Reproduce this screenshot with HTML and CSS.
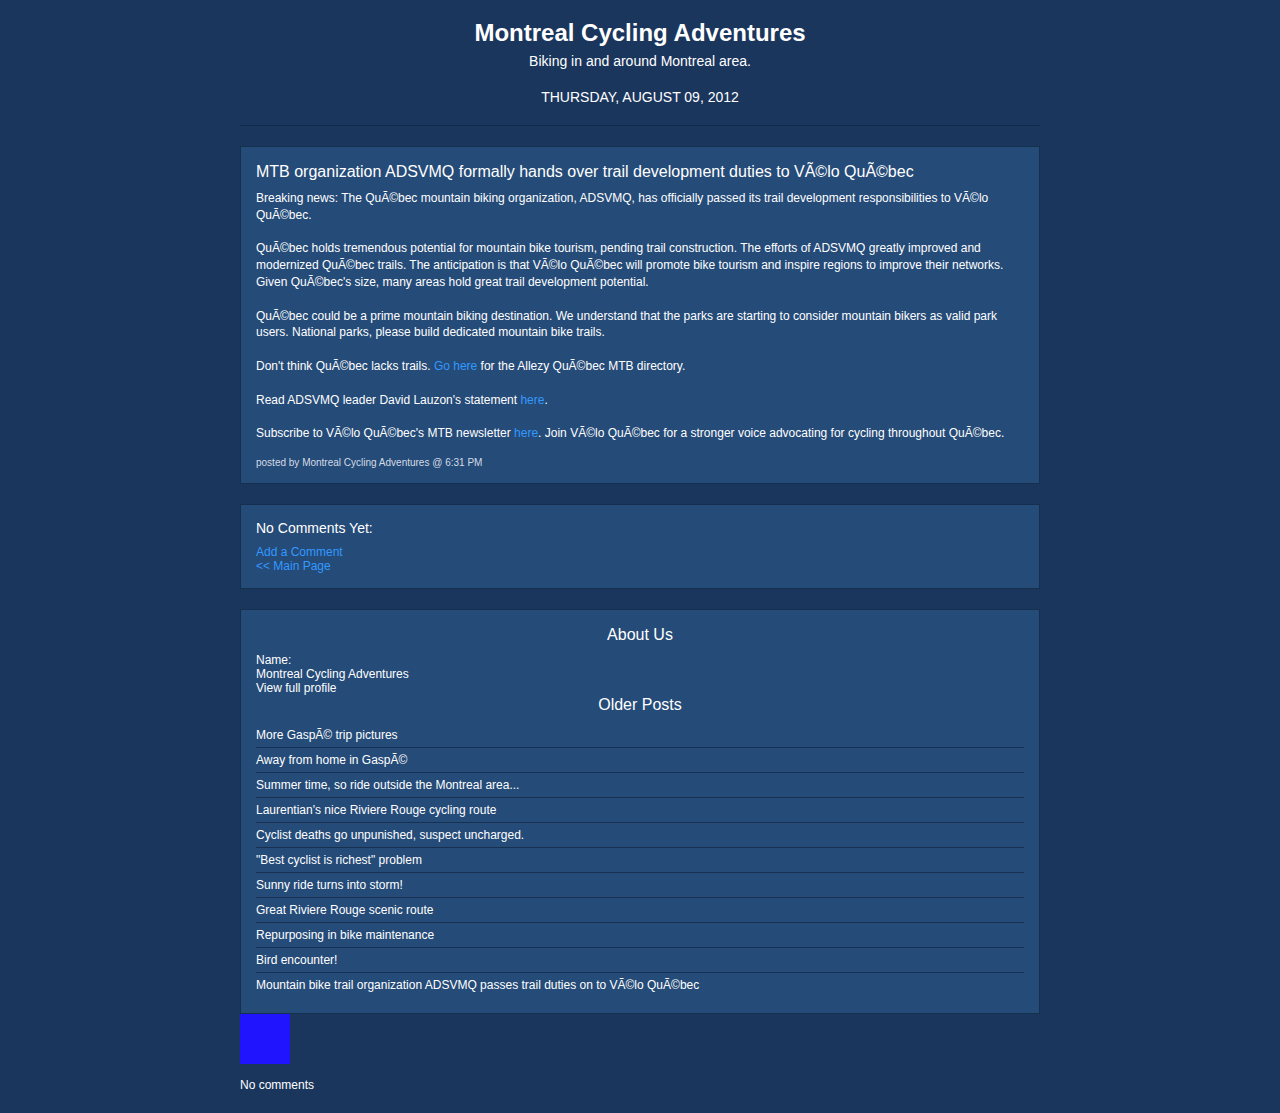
FILE: index.html
```html
<!DOCTYPE html>
<html>
<head>
<meta charset="utf-8">
<title>Montreal Cycling Adventures</title>
<link rel="stylesheet" href="styles.css">
</head>
<body>
<div class="page">
  <header class="site-header">
    <h1 class="site-title">Montreal Cycling Adventures</h1>
    <p class="site-desc">Biking in and around Montreal area.</p>
    <h2 class="date-header">THURSDAY, AUGUST 09, 2012</h2>
  </header>

  <section class="box post">
    <h3 class="post-title">MTB organization ADSVMQ formally hands over trail development duties to VÃ©lo QuÃ©bec</h3>
    <div class="post-body">
      <p>Breaking news: The QuÃ©bec mountain biking organization, ADSVMQ, has officially passed its trail development responsibilities to VÃ©lo QuÃ©bec.</p>
      <p>QuÃ©bec holds tremendous potential for mountain bike tourism, pending trail construction. The efforts of ADSVMQ greatly improved and modernized QuÃ©bec trails. The anticipation is that VÃ©lo QuÃ©bec will promote bike tourism and inspire regions to improve their networks. Given QuÃ©bec's size, many areas hold great trail development potential.</p>
      <p>QuÃ©bec could be a prime mountain biking destination. We understand that the parks are starting to consider mountain bikers as valid park users. National parks, please build dedicated mountain bike trails.</p>
      <p>Don't think QuÃ©bec lacks trails. <a href="#">Go here</a> for the Allezy QuÃ©bec MTB directory.</p>
      <p>Read ADSVMQ leader David Lauzon's statement <a href="#">here</a>.</p>
      <p>Subscribe to VÃ©lo QuÃ©bec's MTB newsletter <a href="#">here</a>. Join VÃ©lo QuÃ©bec for a stronger voice advocating for cycling throughout QuÃ©bec.</p>
    </div>
    <p class="post-footer">posted by Montreal Cycling Adventures @ 6:31 PM</p>
  </section>

  <section class="box comments">
    <h4 class="comments-title">No Comments Yet:</h4>
    <div class="comment-links">
      <a href="#">Add a Comment</a>
      <a href="#">&lt;&lt; Main Page</a>
    </div>
  </section>

  <section class="box sidebar">
    <h2 class="side-title">About Us</h2>
    <div class="profile">
      <span>Name:</span>
      <span>Montreal Cycling Adventures</span>
      <span>View full profile</span>
    </div>
    <h2 class="side-title older">Older Posts</h2>
    <ul class="recent">
      <li>More GaspÃ© trip pictures</li>
      <li>Away from home in GaspÃ©</li>
      <li>Summer time, so ride outside the Montreal area...</li>
      <li>Laurentian's nice Riviere Rouge cycling route</li>
      <li>Cyclist deaths go unpunished, suspect uncharged.</li>
      <li>"Best cyclist is richest" problem</li>
      <li>Sunny ride turns into storm!</li>
      <li>Great Riviere Rouge scenic route</li>
      <li>Repurposing in bike maintenance</li>
      <li>Bird encounter!</li>
      <li>Mountain bike trail organization ADSVMQ passes trail duties on to VÃ©lo QuÃ©bec</li>
    </ul>
  </section>

  <div class="badge"></div>
  <p class="no-comments">No comments</p>
</div>
</body>
</html>
```

FILE: styles.css
```css
html, body {
  margin: 0;
  padding: 0;
  background: #1b365d;
  color: #ffffff;
  font-family: "Liberation Sans", Arial, sans-serif;
  font-size: 12px;
}

.page {
  width: 800px;
  margin: 0 auto;
  padding-top: 19px;
  padding-bottom: 20px;
}

.site-header {
  text-align: center;
  border-bottom: 1px solid #142a4a;
  padding-bottom: 20px;
  margin-bottom: 20px;
}

.site-title {
  margin: 0;
  font-size: 24px;
  line-height: 28px;
  font-weight: bold;
}

.site-desc {
  margin: 6px 0 0;
  font-size: 14px;
  line-height: 16px;
}

.date-header {
  margin: 20px 0 0;
  font-size: 14px;
  line-height: 16px;
  font-weight: normal;
}

.box {
  background: #254b78;
  border: 1px solid #15304f;
  padding: 15px;
  margin-bottom: 20px;
}

a {
  color: #3399ff;
  text-decoration: none;
}

.post {
  padding-bottom: 14px;
}

.post-title {
  margin: 0 0 9px;
  font-size: 16px;
  line-height: 19px;
  font-weight: normal;
}

.post-body p {
  margin: 0 0 16.8px;
  line-height: 16.8px;
}

.post-body p:last-child {
  margin-bottom: 0;
}

.post-footer {
  margin: 15px 0 0;
  font-size: 10px;
  line-height: 12px;
  color: #d4dbe6;
}

.comments-title {
  margin: 0 0 9px;
  font-size: 14px;
  line-height: 16px;
  font-weight: normal;
}

.comment-links {
  display: flex;
  flex-direction: column;
  align-items: flex-start;
  line-height: 14px;
}

.sidebar {
  margin-bottom: 0;
  padding-bottom: 16px;
}

.side-title {
  margin: 0;
  text-align: center;
  font-size: 16px;
  line-height: 19px;
  font-weight: normal;
}

.profile {
  display: flex;
  flex-direction: column;
  margin-top: 9px;
  line-height: 14px;
}

.recent {
  list-style: none;
  margin: 9px 0 0;
  padding: 0;
}

.recent li {
  padding: 5px 0;
  line-height: 14px;
  border-bottom: 1px solid #17304f;
}

.recent li:last-child {
  border-bottom: none;
}

.badge {
  width: 50px;
  height: 50px;
  background: #2014ff;
}

.no-comments {
  margin: 14px 0 0;
  line-height: 14px;
}
```
